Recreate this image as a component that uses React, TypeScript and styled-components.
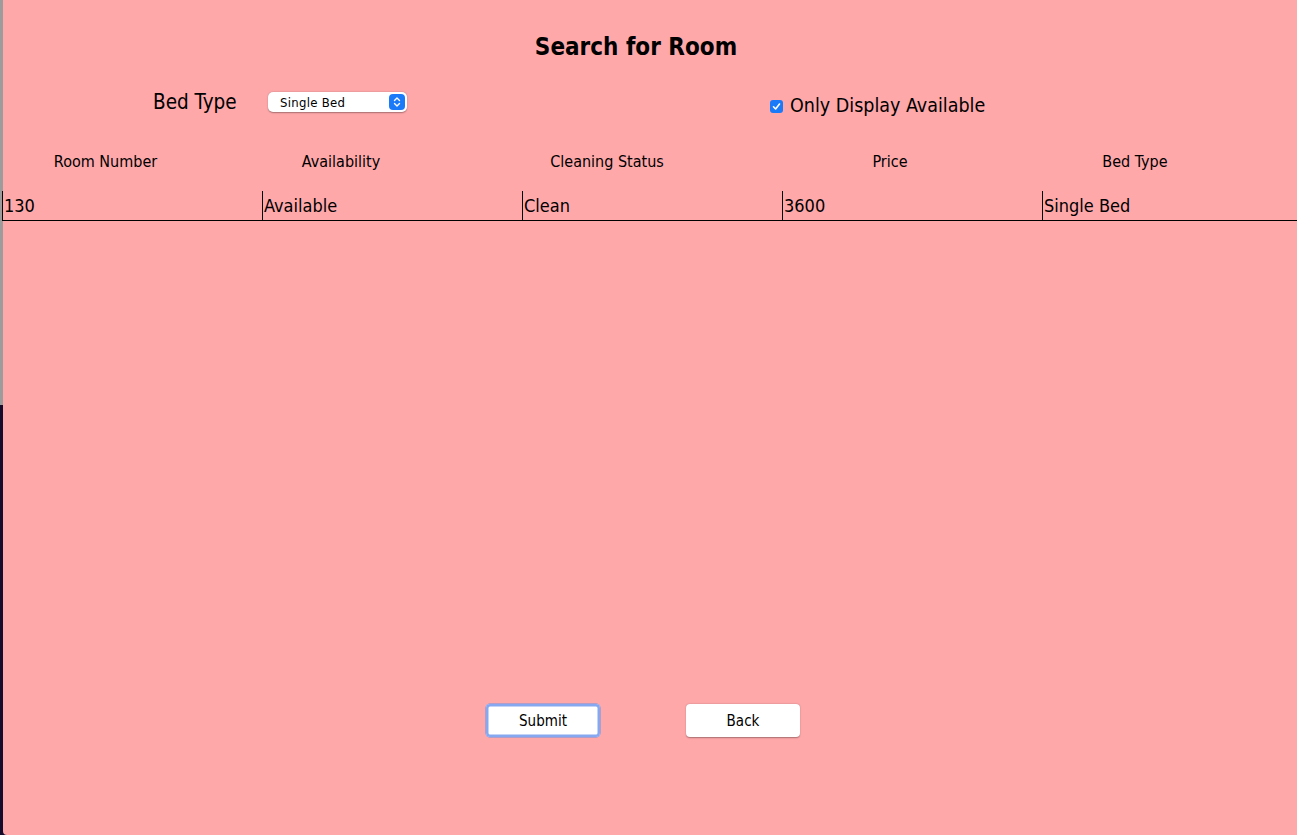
import React from 'react';
import styled, {createGlobalStyle} from "styled-components";

const GlobalStyle = createGlobalStyle`
  html, body {
    margin: 0;
    padding: 0;
    height: 100%;
    background: #140c2a;
  }

  #root {
    height: 100%;
  }
`

const FONT = `"DejaVu Sans Condensed", "DejaVu Sans", Tahoma, sans-serif`

const StyledWindow = styled.div`
  display: flex;
  height: 835px;
  overflow: hidden;
  font-family: ${FONT};
  color: #000;
`

const StyledEdge = styled.div`
  width: 3px;
  flex-shrink: 0;
  display: flex;
  flex-direction: column;

  & > div:first-child {
    height: 405px;
    background: #9c9c9c;
  }

  & > div:last-child {
    flex: 1;
    background: #140c2a;
  }
`

const StyledPanel = styled.div`
  flex: 1;
  min-width: 0;
  display: flex;
  flex-direction: column;
  background: #ffa8aa;
  border-bottom-left-radius: 4px;
`

const Title = styled.h1`
  margin: 0;
  padding-top: 32px;
  padding-right: 28px;
  height: 56px;
  box-sizing: border-box;
  text-align: center;
  font-size: 24px;
  line-height: 30px;
  font-weight: bold;
`

const FilterBar = styled.div`
  display: flex;
  align-items: flex-start;
  height: 77px;
  padding-top: 34px;
  box-sizing: border-box;
  padding-left: 150px;
`

const FilterLabel = styled.span`
  font-size: 20.5px;
  line-height: 24px;
  width: 115px;
`

const Select = styled.div`
  display: flex;
  align-items: center;
  justify-content: space-between;
  width: 139px;
  height: 20px;
  margin-top: 2px;
  box-sizing: border-box;
  padding: 0 2px 0 12px;
  background: #fff;
  border-radius: 5px;
  box-shadow: 0 0.5px 1.5px rgba(0, 0, 0, 0.35);
  font-size: 13px;
  letter-spacing: 0.3px;
`

const Stepper = styled.span`
  display: flex;
  align-items: center;
  justify-content: center;
  width: 16px;
  height: 16px;
  border-radius: 4px;
  background: #1a7af8;
`

const CheckLabel = styled.label`
  display: flex;
  align-items: center;
  gap: 7px;
  margin-left: 363px;
  margin-top: 4px;
  font-size: 19.5px;
  line-height: 24px;
`

const CheckBox = styled.span`
  display: flex;
  align-items: center;
  justify-content: center;
  width: 13px;
  height: 13px;
  border-radius: 3px;
  background: #1a7af8;
`

const HeaderRow = styled.div`
  display: grid;
  grid-template-columns: 205px 266px 266px 300px 190px;
  height: 57px;
  align-items: center;
  font-size: 16px;
`

const HeaderCell = styled.div`
  text-align: center;
`

const DataRow = styled.div`
  display: grid;
  grid-template-columns: repeat(5, 260px);
  height: 30px;
  margin-top: 1px;
  margin-left: -1px;
  border-bottom: 1px solid #000;
  box-sizing: border-box;
  font-size: 18px;
`

const DataCell = styled.div`
  border-left: 1px solid #000;
  padding-left: 1px;
  line-height: 30px;
  white-space: nowrap;
`

const Spacer = styled.div`
  flex: 1;
`

const ButtonBar = styled.div`
  display: flex;
  justify-content: center;
  gap: 86px;
  padding-right: 14px;
  height: 131px;
`

const Button = styled.button<{ $focused?: boolean }>`
  width: 114px;
  height: 33px;
  flex-shrink: 0;
  background: #fff;
  border: none;
  border-radius: 4px;
  font-family: ${FONT};
  font-size: 15px;
  color: #000;
  box-shadow: ${p => p.$focused
    ? "0 0 0 2.5px #86a8f0 inset, 0 0 0 0.5px #6b90e8"
    : "0 0.5px 1.5px rgba(0, 0, 0, 0.35)"};
`

const columns = ["Room Number", "Availability", "Cleaning Status", "Price", "Bed Type"]
const rows = [["130", "Available", "Clean", "3600", "Single Bed"]]

const App = () => {
    return (
        <>
            <GlobalStyle/>
            <StyledWindow>
                <StyledEdge>
                    <div/>
                    <div/>
                </StyledEdge>
                <StyledPanel>
                    <Title>Search for Room</Title>
                    <FilterBar>
                        <FilterLabel>Bed Type</FilterLabel>
                        <Select>
                            Single Bed
                            <Stepper>
                                <svg width="8" height="12" viewBox="0 0 8 12" fill="none" stroke="#fff"
                                     strokeWidth="1.4" strokeLinecap="round" strokeLinejoin="round">
                                    <path d="M1.5 4.5 L4 2 L6.5 4.5"/>
                                    <path d="M1.5 7.5 L4 10 L6.5 7.5"/>
                                </svg>
                            </Stepper>
                        </Select>
                        <CheckLabel>
                            <CheckBox>
                                <svg width="9" height="9" viewBox="0 0 9 9" fill="none" stroke="#fff"
                                     strokeWidth="1.6" strokeLinecap="round" strokeLinejoin="round">
                                    <path d="M1.5 4.8 L3.6 7 L7.5 2"/>
                                </svg>
                            </CheckBox>
                            Only Display Available
                        </CheckLabel>
                    </FilterBar>
                    <HeaderRow>
                        {columns.map(c => <HeaderCell key={c}>{c}</HeaderCell>)}
                    </HeaderRow>
                    {rows.map(r => (
                        <DataRow key={r[0]}>
                            {r.map((v, i) => <DataCell key={i}>{v}</DataCell>)}
                        </DataRow>
                    ))}
                    <Spacer/>
                    <ButtonBar>
                        <Button $focused>Submit</Button>
                        <Button>Back</Button>
                    </ButtonBar>
                </StyledPanel>
            </StyledWindow>
        </>
    )
}

export default App;
